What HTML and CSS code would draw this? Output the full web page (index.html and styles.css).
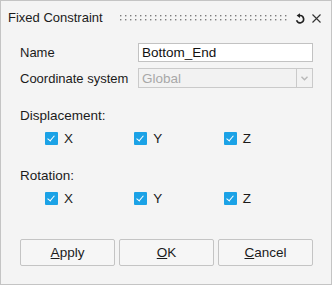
FILE: index.html
```html
<!doctype html>
<html>
<head>
<meta charset="utf-8">
<title>Fixed Constraint</title>
<link rel="stylesheet" href="styles.css">
</head>
<body>
<div class="dialog">
	<div class="titlebar">
		<span class="title">Fixed Constraint</span>
		<svg class="grip" height="6">
			<defs>
				<pattern id="dots" width="5" height="4" patternUnits="userSpaceOnUse">
					<rect x="0" y="0" width="1.4" height="1.4" fill="#7c7c7c"/>
				</pattern>
			</defs>
			<rect x="0" y="0" width="100%" height="6" fill="url(#dots)"/>
		</svg>
		<svg class="reset" width="10" height="11" viewBox="0 0 10 11">
			<path d="M4.6 2.6 A3.6 3.6 0 1 1 1.6 7.3" fill="none" stroke="#222" stroke-width="1.6"/>
			<path d="M1.6 2.6 L5 0.2 L5 5 Z" fill="#222"/>
		</svg>
		<svg class="close" width="9" height="9" viewBox="0 0 9 9">
			<path d="M0.5 0.5 L8.5 8.5 M8.5 0.5 L0.5 8.5" stroke="#333" stroke-width="1.1"/>
		</svg>
	</div>

	<div class="form">
		<div class="field">
			<label>Name</label>
			<div class="input">Bottom_End</div>
		</div>
		<div class="field">
			<label>Coordinate system</label>
			<div class="select">
				<span class="value">Global</span>
				<span class="arrow">
					<svg width="7" height="5" viewBox="0 0 7 5"><path d="M0.5 0.8 L3.5 3.8 L6.5 0.8" fill="none" stroke="#b8b8b8" stroke-width="1.4"/></svg>
				</span>
			</div>
		</div>

		<div class="group">Displacement:</div>
		<div class="checks">
			<span class="check"><i class="box"></i>X</span>
			<span class="check"><i class="box"></i>Y</span>
			<span class="check"><i class="box"></i>Z</span>
		</div>

		<div class="group rot">Rotation:</div>
		<div class="checks">
			<span class="check"><i class="box"></i>X</span>
			<span class="check"><i class="box"></i>Y</span>
			<span class="check"><i class="box"></i>Z</span>
		</div>

		<div class="buttons">
			<button><u>A</u>pply</button>
			<button><u>O</u>K</button>
			<button><u>C</u>ancel</button>
		</div>
	</div>
</div>
</body>
</html>
```
FILE: styles.css
```css
html, body{
	margin: 0;
	padding: 0;
}

body{
	font-family: "Liberation Sans", Arial, sans-serif;
	font-size: 13px;
	color: #1b1b1b;
	background: #f4f4f4;
}

.dialog{
	width: 332px;
	height: 285px;
	box-sizing: border-box;
	border: 1px solid #c4c4c4;
	background: #f4f4f4;
	display: flex;
	flex-direction: column;
}

.titlebar{
	height: 31px;
	box-sizing: border-box;
	padding: 9px 10px 0 7px;
	display: flex;
	align-items: flex-start;
	line-height: 15px;
}

.grip{
	flex: 1;
	height: 6px;
	margin: 5px 8px 0 17px;
}

.reset{
	margin: 3px 0 0 0;
}

.close{
	margin: 4px 0 0 7px;
}

.form{
	padding: 11px 18px 0 19px;
	display: flex;
	flex-direction: column;
}

.field{
	display: grid;
	grid-template-columns: 118px 1fr;
	align-items: center;
	margin-bottom: 6px;
	line-height: 15px;
}

.input{
	height: 19px;
	box-sizing: border-box;
	border: 1px solid #c2c2c2;
	background: #fff;
	padding: 1px 3px 0 3px;
	color: #111;
	font-size: 13.5px;
}

.select{
	height: 20px;
	box-sizing: border-box;
	border: 1px solid #cacaca;
	background: #f2f2f2;
	display: flex;
}

.select .value{
	flex: 1;
	padding: 2px 3px 0 3px;
	color: #a8a8a8;
	font-size: 13.5px;
}

.select .arrow{
	width: 15px;
	border-left: 1px solid #cacaca;
	display: flex;
	align-items: center;
	justify-content: center;
}

.group{
	margin-top: 14px;
	line-height: 15px;
	font-size: 13.5px;
}

.group.rot{
	margin-top: 22px;
}

.checks{
	display: flex;
	margin: 8px 0 0 25px;
	line-height: 15px;
}

.check{
	width: 91px;
	display: flex;
	align-items: center;
	font-size: 13.5px;
}

.box{
	width: 13px;
	height: 13px;
	margin-right: 6px;
	border-radius: 1px;
	background: #1ba2e6;
	position: relative;
}

.box::after{
	content: "";
	position: absolute;
	left: 4px;
	top: 2px;
	width: 3px;
	height: 6px;
	border: solid #fff;
	border-width: 0 1.6px 1.6px 0;
	transform: rotate(40deg);
}

.buttons{
	display: flex;
	gap: 4px;
	margin-top: 33px;
}

button{
	width: 95px;
	height: 27px;
	box-sizing: border-box;
	border: 1px solid #c4c4c4;
	border-radius: 2px;
	background: #f6f6f6;
	font-family: "Liberation Sans", Arial, sans-serif;
	font-size: 13.5px;
	color: #1b1b1b;
	padding: 0;
}
```
